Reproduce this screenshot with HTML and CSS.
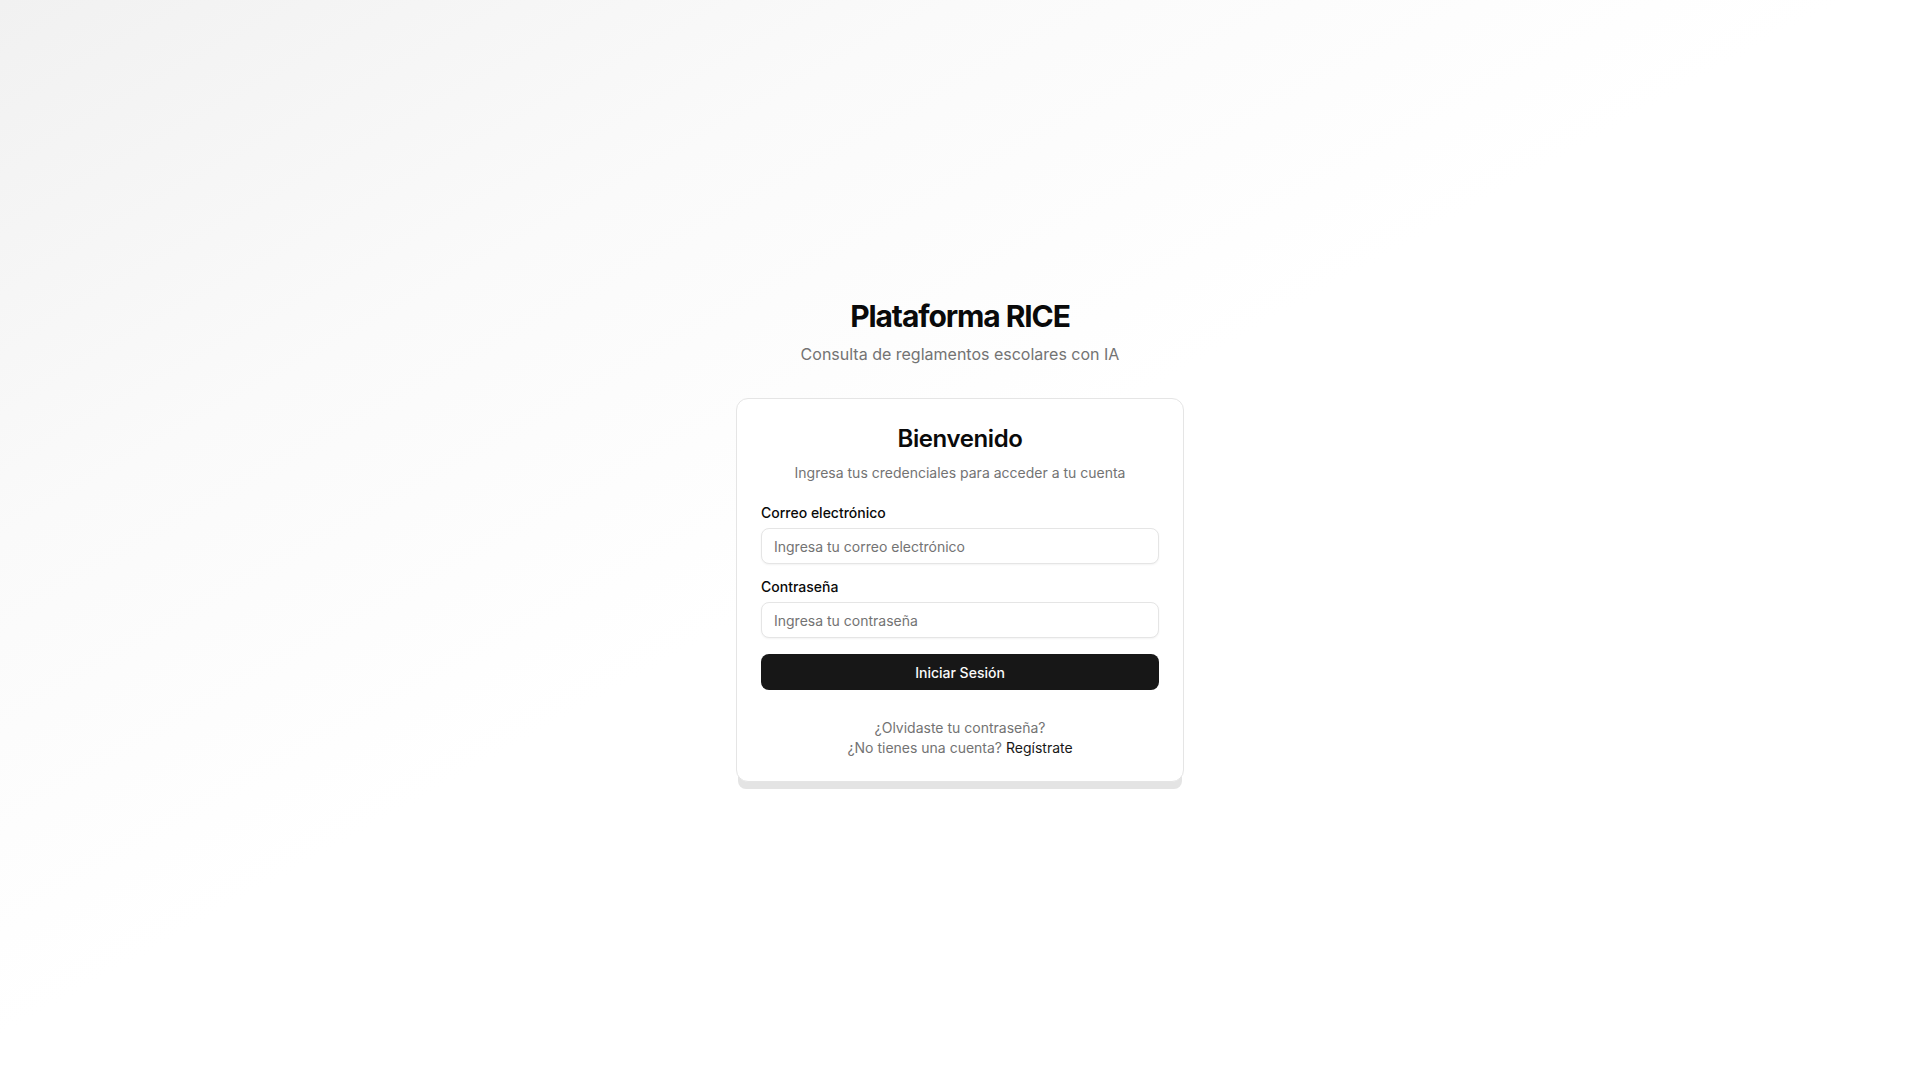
FILE: index.html
```html
<!DOCTYPE html>
<html lang="es">
<head>
    <meta charset="UTF-8">
    <meta name="viewport" content="width=device-width, initial-scale=1.0">
    <title>Plataforma RICE - Iniciar Sesión</title>
    <link rel="stylesheet" href="styles.css">
</head>
<body>
<div class="page">
    <div class="wrapper">
        <div class="brand">
            <h1>Plataforma RICE</h1>
            <p>Consulta de reglamentos escolares con IA</p>
        </div>

        <div class="card-stack">
            <div class="card">
                <div class="card-header">
                    <h2>Bienvenido</h2>
                    <p>Ingresa tus credenciales para acceder a tu cuenta</p>
                </div>

                <form class="login-form" onsubmit="return false;">
                    <div class="field">
                        <label for="email">Correo electrónico</label>
                        <input type="email" id="email" placeholder="Ingresa tu correo electrónico">
                    </div>
                    <div class="field">
                        <label for="password">Contraseña</label>
                        <input type="password" id="password" placeholder="Ingresa tu contraseña">
                    </div>
                    <button type="submit">Iniciar Sesión</button>
                </form>

                <div class="card-footer">
                    <a href="#" class="muted-link">¿Olvidaste tu contraseña?</a>
                    <p>¿No tienes una cuenta? <a href="#">Regístrate</a></p>
                </div>
            </div>
        </div>
    </div>
</div>
</body>
</html>
```

FILE: styles.css
```css
* {
    box-sizing: border-box;
}
body {
    font-family: Inter, "Noto Sans", Arial, sans-serif;
    color: #0a0a0a;
    margin: 0;
    padding: 0;
}
.page {
    min-height: 100vh;
    display: flex;
    align-items: center;
    justify-content: center;
    background: linear-gradient(to bottom right, #f1f1f1 0%, #fafafa 25%, #ffffff 48%, #ffffff 100%);
}
.wrapper {
    width: 448px;
}
.brand {
    text-align: center;
    margin-bottom: 32px;
}
.brand h1 {
    margin: 0;
    font-size: 30px;
    line-height: 36px;
    font-weight: 700;
    letter-spacing: -1.1px;
}
.brand p {
    margin: 8px 0 0;
    font-size: 16px;
    line-height: 24px;
    color: #737373;
}

/* grey strip peeking out under the card */
.card-stack {
    position: relative;
    z-index: 0;
}
.card-stack::before {
    content: "";
    position: absolute;
    left: 2px;
    right: 2px;
    bottom: -7px;
    height: 24px;
    background: #e4e4e4;
    border-radius: 0 0 8px 8px;
    z-index: -1;
}
.card {
    background: #fff;
    border: 1px solid #e5e5e5;
    border-radius: 12px;
    padding: 24px 24px 23px;
}
.card-header {
    text-align: center;
}
.card-header h2 {
    margin: 0;
    font-size: 24px;
    line-height: 32px;
    font-weight: 600;
    letter-spacing: -0.4px;
}
.card-header p {
    margin: 8px 0 0;
    font-size: 14px;
    line-height: 20px;
    color: #737373;
}
.login-form {
    margin-top: 23px;
    display: flex;
    flex-direction: column;
    gap: 16px;
}
.field {
    display: flex;
    flex-direction: column;
    gap: 8px;
}
.field label {
    font-size: 14px;
    line-height: 14px;
    font-weight: 500;
}
.field input {
    height: 36px;
    width: 100%;
    padding: 0 12px;
    font-family: inherit;
    font-size: 14px;
    color: #0a0a0a;
    background: #fff;
    border: 1px solid #e5e5e5;
    border-radius: 8px;
    box-shadow: 0 1px 2px rgba(0, 0, 0, 0.05);
    outline: none;
}
.field input::placeholder {
    color: #737373;
}
.login-form button {
    height: 36px;
    width: 100%;
    border: none;
    border-radius: 8px;
    background-color: #171717;
    color: #fafafa;
    font-family: inherit;
    font-size: 14px;
    font-weight: 500;
    cursor: pointer;
}
.login-form button:hover {
    background-color: #262626;
}
.card-footer {
    margin-top: 28px;
    text-align: center;
    font-size: 14px;
    line-height: 20px;
    color: #737373;
}
.card-footer p {
    margin: 0;
}
.card-footer a {
    color: #171717;
    text-decoration: none;
}
.card-footer .muted-link {
    display: block;
    color: #737373;
}
```
